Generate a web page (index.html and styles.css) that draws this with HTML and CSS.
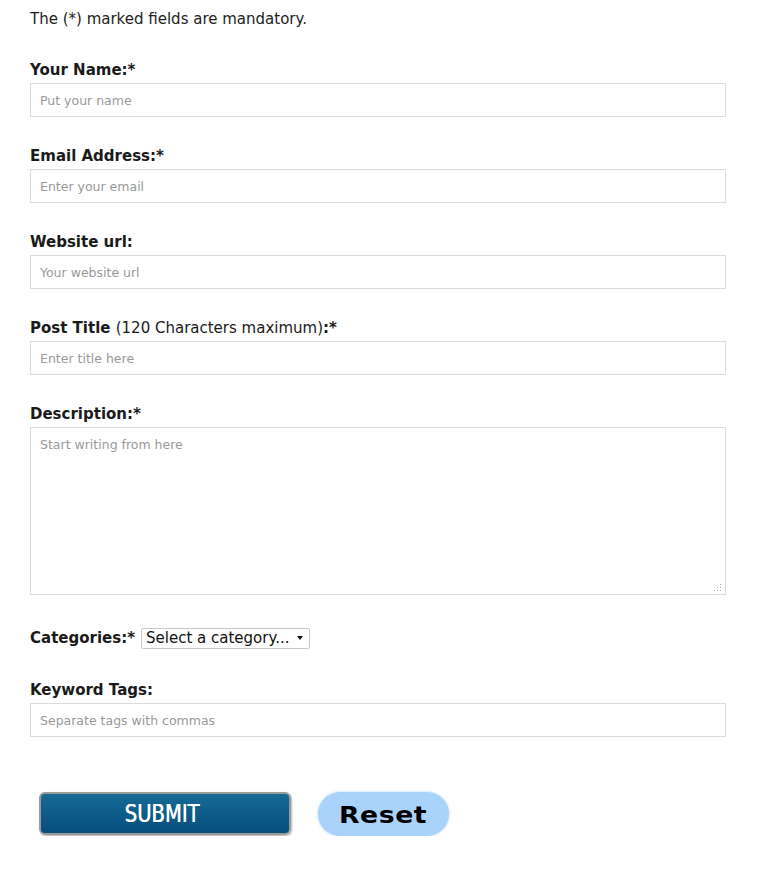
FILE: index.html
```html
<!DOCTYPE html>
<html>
<head>
<meta charset="utf-8">
<link rel="stylesheet" href="styles.css">
</head>
<body>
<form class="form">
  <p class="intro">The (*) marked fields are mandatory.</p>
  <div class="field">
    <label class="label">Your Name:*</label>
    <input class="input" type="text" placeholder="Put your name">
  </div>
  <div class="field">
    <label class="label">Email Address:*</label>
    <input class="input" type="text" placeholder="Enter your email">
  </div>
  <div class="field">
    <label class="label">Website url:</label>
    <input class="input" type="text" placeholder="Your website url">
  </div>
  <div class="field">
    <label class="label">Post Title <span class="normal">(120 Characters maximum)</span>:*</label>
    <input class="input" type="text" placeholder="Enter title here">
  </div>
  <div class="field">
    <label class="label">Description:*</label>
    <div class="textarea-wrap">
      <textarea class="textarea" placeholder="Start writing from here"></textarea>
      <svg class="grip" width="9" height="9" viewBox="0 0 9 9">
        <rect x="7" y="1" width="1" height="1" fill="#b0b0b0"/>
        <rect x="4" y="4" width="1" height="1" fill="#b0b0b0"/>
        <rect x="7" y="4" width="1" height="1" fill="#b0b0b0"/>
        <rect x="1" y="7" width="1" height="1" fill="#b0b0b0"/>
        <rect x="4" y="7" width="1" height="1" fill="#b0b0b0"/>
        <rect x="7" y="7" width="1" height="1" fill="#b0b0b0"/>
      </svg>
    </div>
  </div>
  <div class="cat-row">
    <label class="label">Categories:*</label>
    <span class="select-wrap">
      <select class="select"><option>Select a category...</option></select>
    </span>
  </div>
  <div class="field">
    <label class="label">Keyword Tags:</label>
    <input class="input" type="text" placeholder="Separate tags with commas">
  </div>
  <div class="buttons">
    <button type="button" class="btn-submit"><span class="submit-text">SUBMIT</span></button>
    <button type="reset" class="btn-reset"><span class="reset-text">Reset</span></button>
  </div>
</form>
</body>
</html>
```
FILE: styles.css
```css
html, body {
  margin: 0;
  padding: 0;
  background: #ffffff;
}
body {
  font-family: "DejaVu Sans", Verdana, sans-serif;
  font-size: 15px;
  color: #222222;
}
.form {
  padding: 9px 32px 0 30px;
  width: 696px;
}
.intro {
  margin: 0 0 31px 0;
  line-height: 20px;
  font-size: 15px;
}
.field {
  display: flex;
  flex-direction: column;
  gap: 3px;
  margin-bottom: 29px;
}
.label {
  font-weight: bold;
  font-size: 15px;
  line-height: 20px;
  color: #1a1a1a;
}
.normal {
  font-weight: normal;
}
.input, .textarea {
  box-sizing: border-box;
  width: 696px;
  height: 34px;
  border: 1px solid #dcdcdc;
  padding: 0 9px;
  font-family: "DejaVu Sans", Verdana, sans-serif;
  font-size: 12.5px;
  color: #333;
  outline: none;
  margin: 0;
}
.textarea-wrap {
  position: relative;
  width: 696px;
  height: 168px;
}
.textarea {
  height: 168px;
  padding: 9px 9px;
  resize: none;
  display: block;
}
.grip {
  position: absolute;
  right: 4px;
  bottom: 3px;
}
.input::placeholder, .textarea::placeholder {
  color: #999999;
}
.cat-row {
  display: flex;
  align-items: center;
  gap: 6px;
  margin-top: 33px;
  margin-bottom: 32px;
  height: 20px;
}
.select-wrap {
  position: relative;
  display: inline-block;
}
.select {
  appearance: none;
  -webkit-appearance: none;
  box-sizing: border-box;
  display: block;
  width: 169px;
  height: 21px;
  border: 1px solid #c8c8c8;
  border-radius: 2px;
  background: #ffffff;
  padding: 0 0 0 4px;
  font-family: "DejaVu Sans", Verdana, sans-serif;
  font-size: 15px;
  color: #111;
  margin: 0;
}
.select-wrap::after {
  content: "";
  position: absolute;
  right: 7px;
  top: 8px;
  border-left: 3.5px solid transparent;
  border-right: 3.5px solid transparent;
  border-top: 4px solid #111;
  pointer-events: none;
}
.buttons {
  display: flex;
  align-items: flex-start;
  gap: 27px;
  margin-top: 55px;
  padding-left: 9px;
}
.btn-submit {
  box-sizing: border-box;
  width: 252px;
  height: 43px;
  border: 2px solid #9a9a9a;
  border-radius: 6px;
  background: linear-gradient(#166a95, #064d7c);
  box-shadow: 1px 1px 2px rgba(0,0,0,0.3);
  color: #ffffff;
  font-family: "DejaVu Sans Condensed", "DejaVu Sans", sans-serif;
  font-size: 25px;
  padding: 0 7px 0 0;
  line-height: 39px;
}
.submit-text {
  display: inline-block;
  transform: scaleX(0.87);
  text-shadow: 0.5px 0 0 #ffffff;
  margin-top: -1px;
}
.btn-reset {
  box-sizing: border-box;
  width: 131px;
  height: 44px;
  border: none;
  border-radius: 22px;
  background: #aad3fb;
  box-shadow: 0 0 3px rgba(170,211,251,0.9);
  color: #000000;
  font-family: "DejaVu Sans", Verdana, sans-serif;
  font-weight: bold;
  font-size: 23px;
  padding: 0;
}
.reset-text {
  display: inline-block;
  letter-spacing: 0.5px;
  transform: scaleX(1.16);
  margin-top: 2px;
}
```
